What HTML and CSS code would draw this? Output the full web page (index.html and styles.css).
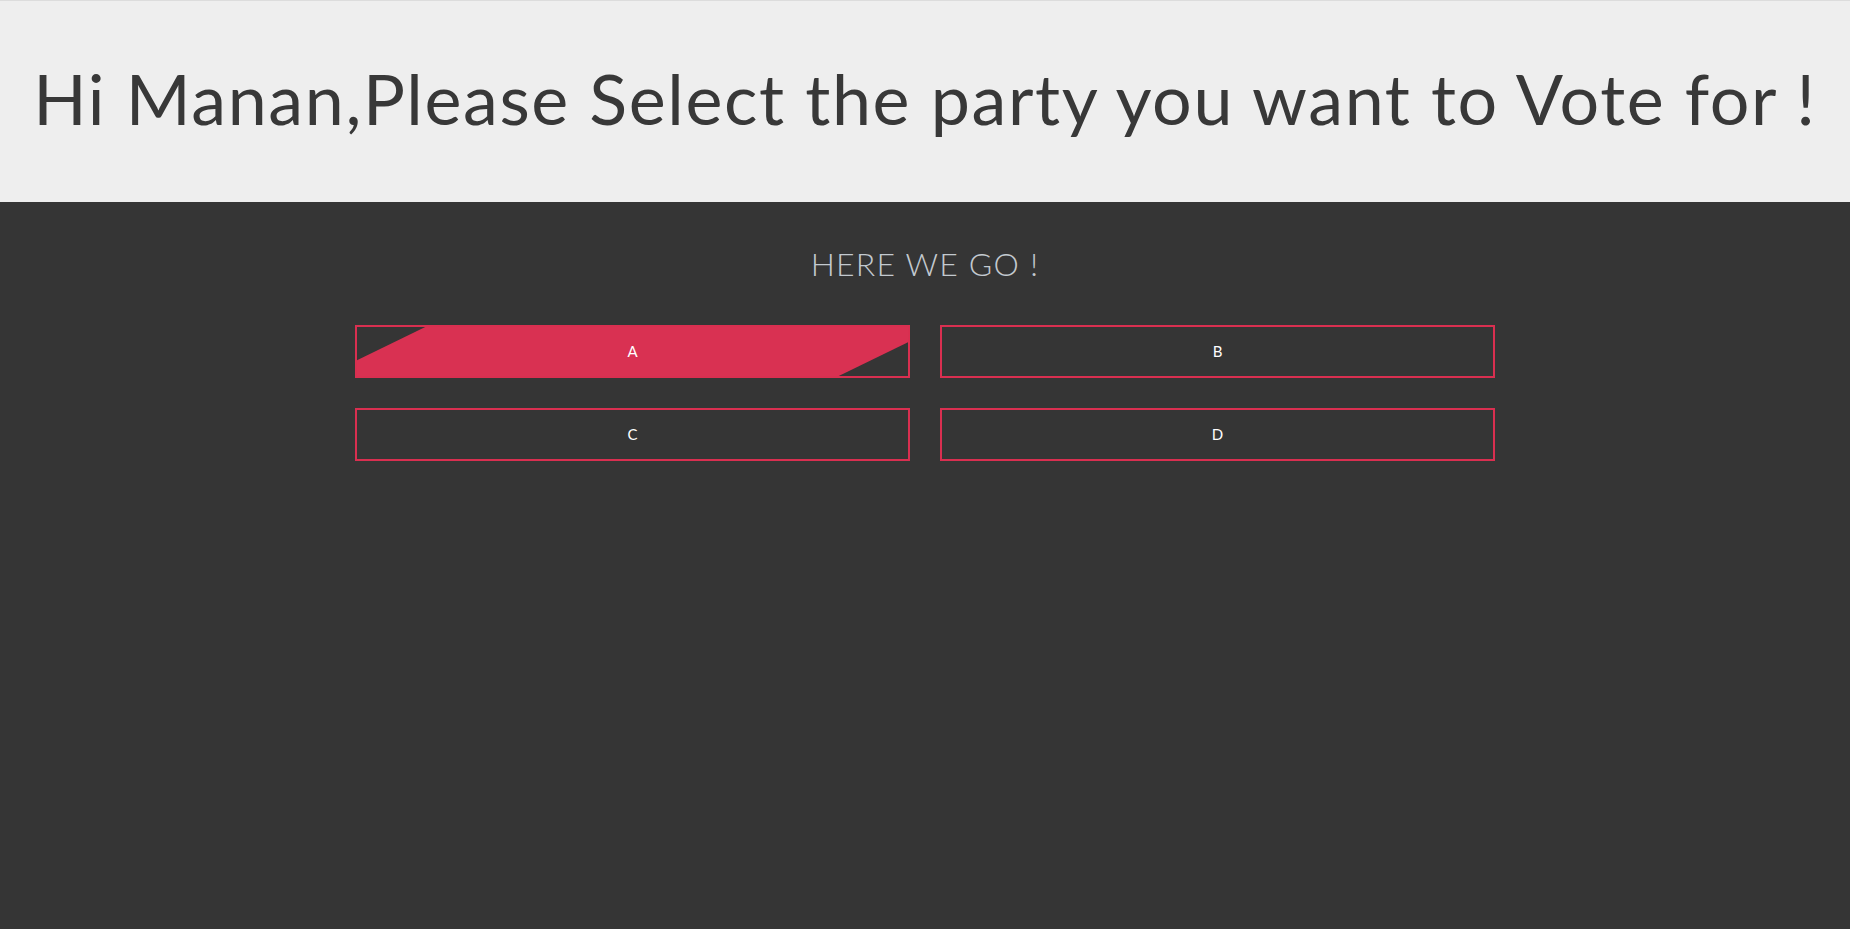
FILE: index.html
```html
<!DOCTYPE html>
<html lang="en">
<head>
<meta charset="utf-8">
<title>Vote</title>
<link rel="stylesheet" href="styles.css">
</head>
<body>
<header class="hero">
  <h1 class="hero-title">Hi Manan,Please Select the party you want to Vote for !</h1>
</header>
<main class="stage">
  <h2 class="stage-title">HERE WE GO !</h2>
  <div class="party-grid">
    <button class="party party-active"><span class="party-label">A</span></button>
    <button class="party"><span class="party-label">B</span></button>
    <button class="party"><span class="party-label">C</span></button>
    <button class="party"><span class="party-label">D</span></button>
  </div>
</main>
</body>
</html>
```
FILE: styles.css
```css
html, body {
  margin: 0;
  padding: 0;
  height: 100%;
}
body {
  background: #353535;
  font-family: "Lato", "Noto Sans", sans-serif;
}
.hero {
  border-top: 1px solid #dcdcdc;
  background: #eeeeee;
  height: 202px;
  box-sizing: border-box;
  padding-bottom: 7px;
  display: flex;
  align-items: center;
  justify-content: center;
}
.hero-title {
  margin: 0;
  font-family: "Lato", sans-serif;
  font-weight: 400;
  font-size: 70px;
  line-height: 80px;
  color: #383838;
  letter-spacing: 1.6px;
  white-space: nowrap;
}
.stage {
  background: #353535;
  padding-top: 42px;
  min-height: 600px;
}
.stage-title {
  margin: 0;
  text-align: center;
  font-family: "Lato", sans-serif;
  font-weight: 300;
  font-size: 32px;
  line-height: 40px;
  letter-spacing: 1.2px;
  color: #c3c9cf;
}
.party-grid {
  width: 1140px;
  margin: 41px auto 0;
  display: grid;
  grid-template-columns: 1fr 1fr;
  column-gap: 30px;
  row-gap: 30px;
}
.party {
  position: relative;
  overflow: hidden;
  height: 53px;
  border: 2px solid #d92f50;
  background: transparent;
  color: #ffffff;
  font-family: "Lato", sans-serif;
  font-size: 15px;
  padding: 0 0 2px;
  cursor: pointer;
  z-index: 0;
}
.party-active::before {
  content: "";
  position: absolute;
  top: -2px;
  bottom: -2px;
  left: 3.35%;
  width: 93.3%;
  background: #d93152;
  transform: skewX(-64deg);
  z-index: 0;
}
.party-label {
  position: relative;
  z-index: 1;
}
```
